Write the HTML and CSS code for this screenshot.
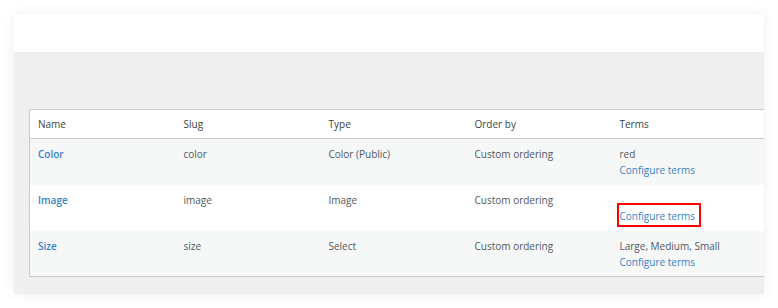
FILE: index.html
```html
<!DOCTYPE html>
<html lang="en">
<head>
    <meta charset="UTF-8">
    <title>Product attributes</title>
    <link rel="stylesheet" href="styles.css">
</head>
<body>
    <div class="card">
        <div class="card-top"></div>
        <div class="card-body">
            <table class="attr-table">
                <thead>
                    <tr>
                        <th class="col-wide">Name</th>
                        <th>Slug</th>
                        <th class="col-wide">Type</th>
                        <th>Order by</th>
                        <th class="col-rest">Terms</th>
                    </tr>
                </thead>
                <tbody>
                    <tr class="alt">
                        <td><a href="#" class="name-link">Color</a></td>
                        <td>color</td>
                        <td>Color (Public)</td>
                        <td>Custom ordering</td>
                        <td>
                            <div>red</div>
                            <a href="#" class="terms-link">Configure terms</a>
                        </td>
                    </tr>
                    <tr>
                        <td><a href="#" class="name-link">Image</a></td>
                        <td>image</td>
                        <td>Image</td>
                        <td>Custom ordering</td>
                        <td>
                            <div class="empty">&ndash;</div>
                            <a href="#" class="terms-link highlighted">Configure terms</a>
                        </td>
                    </tr>
                    <tr class="alt">
                        <td><a href="#" class="name-link">Size</a></td>
                        <td>size</td>
                        <td>Select</td>
                        <td>Custom ordering</td>
                        <td>
                            <div>Large, Medium, Small</div>
                            <a href="#" class="terms-link">Configure terms</a>
                        </td>
                    </tr>
                </tbody>
            </table>
        </div>
    </div>
</body>
</html>
```

FILE: styles.css
```css
* {
    box-sizing: border-box;
}

body {
    margin: 0;
    padding: 14px;
    background: #fff;
    font-family: "Open Sans", "Noto Sans", sans-serif;
    font-size: 10px;
    color: #50575e;
}

/* CARD */
.card {
    width: 750px;
    overflow: hidden;
    box-shadow: 0 0 12px rgba(0, 0, 0, 0.07);
}

.card-top {
    height: 38px;
    background: #fff;
}

.card-body {
    background: #efefef;
    padding: 57px 0 17px 15px;
}

/* TABLE */
.attr-table {
    width: 750px;
    border-collapse: collapse;
    border: 1px solid #c8c9cc;
    background: #fff;
    table-layout: fixed;
}

.attr-table th,
.attr-table td {
    width: 145px;
    text-align: left;
    vertical-align: top;
    line-height: 16px;
    padding: 7px 8px 0;
}

.attr-table th.col-wide {
    width: 146px;
}

.attr-table th.col-rest {
    width: auto;
}

.attr-table th {
    font-weight: normal;
    color: #3c434a;
    height: 29px;
    padding-top: 6px;
    border-bottom: 1px solid #c8c9cc;
}

.attr-table td {
    height: 46px;
}

.attr-table tr.alt td {
    background: #f6f7f7;
}

.name-link {
    color: #3582c4;
    font-weight: 600;
    text-decoration: none;
}

.terms-link {
    color: #3582c4;
    text-decoration: none;
    display: inline-block;
}

.empty {
    color: #d4d6d8;
}

.highlighted {
    position: relative;
}

.highlighted::after {
    content: "";
    position: absolute;
    left: -3px;
    right: -6px;
    top: -5px;
    bottom: -3px;
    border: 2px solid #f00;
}
```
